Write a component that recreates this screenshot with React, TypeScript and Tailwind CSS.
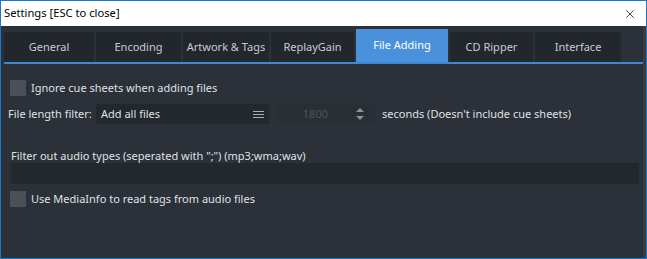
import { X } from "lucide-react";

const tabs = [
  { name: "General", w: "w-[90px]" },
  { name: "Encoding", w: "w-[85px]" },
  { name: "Artwork & Tags", w: "w-[86px]" },
  { name: "ReplayGain", w: "w-[83px]" },
  { name: "File Adding", w: "w-[92px]", active: true },
  { name: "CD Ripper", w: "w-[83px]" },
  { name: "Interface", w: "w-[86px]" },
];

function Checkbox({ label }: { label: string }) {
  return (
    <div className="flex items-center h-4">
      <div className="w-4 h-4 bg-[#4b4f57] shrink-0" />
      <span className="ml-[5px] text-[11px] text-[#dfe1e4]">{label}</span>
    </div>
  );
}

export default function App() {
  return (
    <div
      className="w-[647px] h-[259px] flex flex-col border border-[#1a78cc] bg-white overflow-hidden"
      style={{ fontFamily: '"Noto Sans", "Open Sans", sans-serif' }}
    >
      {/* ── Title bar ── */}
      <div className="h-[25px] shrink-0 flex items-center justify-between pl-[3px] pr-[9px] bg-white">
        <span className="text-[11.2px] text-black">Settings [ESC to close]</span>
        <X size={14} strokeWidth={1.2} className="text-black" />
      </div>

      {/* ── Body ── */}
      <div className="flex-1 flex bg-[#2c3038]">
        <div className="flex-1 flex flex-col pl-[3px] pt-[3px]">
          {/* tabs */}
          <div className="flex items-end gap-[2px] h-[33px]">
            {tabs.map((t) => (
              <div
                key={t.name}
                className={`${t.w} flex justify-center text-[11px] ${
                  t.active
                    ? "h-[33px] bg-[#4a90da] text-white pt-[8px]"
                    : "h-[30px] bg-[#22262d] text-[#c9cbcf] items-center"
                }`}
              >
                {t.name}
              </div>
            ))}
          </div>
          <div className="h-[2px] bg-[#3f88cf] mr-[-1px]" />

          {/* content */}
          <div className="flex flex-col pl-[6px] pt-[16px] text-[11px] text-[#dfe1e4]">
            <Checkbox label="Ignore cue sheets when adding files" />

            <div className="flex items-center mt-[8px] h-5">
              <span className="w-[88px] -ml-[2px]">File length filter:</span>
              <div className="w-[173px] h-5 bg-[#23272e] flex items-center justify-between pl-[5px] pr-[5px]">
                <span>Add all files</span>
                <div className="flex flex-col gap-[2px] w-[11px]">
                  <div className="h-[1px] bg-[#a9adb4]" />
                  <div className="h-[1px] bg-[#a9adb4]" />
                  <div className="h-[1px] bg-[#a9adb4]" />
                </div>
              </div>
              <div className="ml-[6px] w-[100px] h-5 bg-[#2a2e35] flex items-center">
                <span className="w-[53px] text-right text-[#50545b]">1800</span>
                <div className="ml-[28px] flex flex-col items-center gap-[4px]">
                  <svg width="8" height="4" viewBox="0 0 8 4">
                    <path d="M0 4 L4 0 L8 4 Z" fill="#8e9299" />
                  </svg>
                  <svg width="8" height="4" viewBox="0 0 8 4">
                    <path d="M0 0 L8 0 L4 4 Z" fill="#8e9299" />
                  </svg>
                </div>
              </div>
              <span className="ml-[7px]">seconds (Doesn't include cue sheets)</span>
            </div>

            <div className="mt-[25px] ml-[1px] leading-[14px]">
              Filter out audio types (seperated with ";") (mp3;wma;wav)
            </div>
            <div className="ml-[1px] h-[21px] w-[628px] bg-[#23272e]" />

            <div className="mt-[7px]">
              <Checkbox label="Use MediaInfo to read tags from audio files" />
            </div>
          </div>
        </div>
        <div className="w-[3px] bg-[#383c44]" />
      </div>
    </div>
  );
}
